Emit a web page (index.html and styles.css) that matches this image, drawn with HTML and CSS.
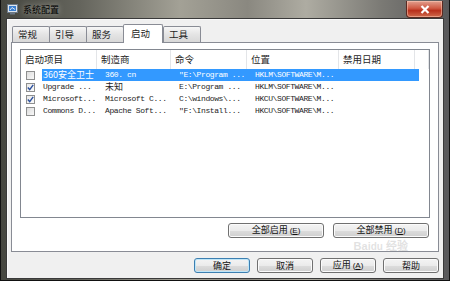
FILE: index.html
```html
<!DOCTYPE html>
<html lang="zh-CN">
  <head>
    <meta charset="UTF-8" />
    <title>系统配置</title>
    <link rel="stylesheet" href="styles.css">
  </head>
  <body>
    <div class="window">
      <div class="titlebar">
        <svg class="app-icon" width="11" height="11" viewBox="0 0 11 11">
          <rect x="0.5" y="0.5" width="10" height="8" fill="#dfe6ee" stroke="#6d7a88"/>
          <rect x="2" y="2" width="7" height="5" fill="#3a7fd0"/>
          <path d="M3 6 L5 3.5 L8 5.5" stroke="#fff" stroke-width="0.8" fill="none"/>
          <rect x="3" y="9" width="5" height="1.5" fill="#6d7a88"/>
        </svg>
        <span class="title">系统配置</span>
        <div class="close">
          <svg width="10" height="9" viewBox="0 0 10 9">
            <path d="M1.5 1 L8.5 8 M8.5 1 L1.5 8" stroke="#fff" stroke-width="2.2"/>
          </svg>
        </div>
      </div>
      <div class="client">
        <div class="tabs">
          <span class="tab">常规</span>
          <span class="tab">引导</span>
          <span class="tab">服务</span>
          <span class="tab active">启动</span>
          <span class="tab">工具</span>
        </div>
        <div class="panel">
          <div class="list">
            <div class="head">
              <span>启动项目</span>
              <span>制造商</span>
              <span>命令</span>
              <span>位置</span>
              <span>禁用日期</span>
              <span></span>
            </div>
            <div class="row">
              <span class="check"></span>
              <div class="cells selected">
                <span><b class="cn">360安全卫士</b></span>
                <span>360. cn</span>
                <span>"E:\Program ...</span>
                <span>HKLM\SOFTWARE\M...</span>
                <span></span>
              </div>
            </div>
            <div class="row">
              <span class="check on">
                <svg width="7" height="7" viewBox="0 0 7 7"><path d="M0.8 3.6 L2.7 5.6 L6.2 0.9" stroke="#2a4f9e" stroke-width="1.4" fill="none"/></svg>
              </span>
              <div class="cells">
                <span>Upgrade ...</span>
                <span><b class="cn">未知</b></span>
                <span>E:\Program ...</span>
                <span>HKLM\SOFTWARE\M...</span>
                <span></span>
              </div>
            </div>
            <div class="row">
              <span class="check on">
                <svg width="7" height="7" viewBox="0 0 7 7"><path d="M0.8 3.6 L2.7 5.6 L6.2 0.9" stroke="#2a4f9e" stroke-width="1.4" fill="none"/></svg>
              </span>
              <div class="cells">
                <span>Microsoft...</span>
                <span>Microsoft C...</span>
                <span>C:\windows\...</span>
                <span>HKCU\SOFTWARE\M...</span>
                <span></span>
              </div>
            </div>
            <div class="row">
              <span class="check"></span>
              <div class="cells">
                <span>Commons D...</span>
                <span>Apache Soft...</span>
                <span>"F:\Install...</span>
                <span>HKCU\SOFTWARE\M...</span>
                <span></span>
              </div>
            </div>
          </div>
          <div class="panel-buttons">
            <button class="btn wide">全部启用 <span class="key">(<u>E</u>)</span></button>
            <button class="btn wide">全部禁用 <span class="key">(<u>D</u>)</span></button>
          </div>
          <div class="watermark">Bai<span>du</span> 经验</div>
        </div>
        <div class="actions">
          <button class="btn default">确定</button>
          <button class="btn">取消</button>
          <button class="btn">应用 <span class="key">(<u>A</u>)</span></button>
          <button class="btn">帮助</button>
        </div>
      </div>
    </div>
  </body>
</html>
```

FILE: styles.css
```css
body,
html {
  margin: 0;
  padding: 0;
  width: 450px;
  height: 281px;
  overflow: hidden;
  font-family: 'Noto Sans CJK SC', 'Liberation Sans', sans-serif;
  color: #1e1e1e;
}
body {
  background: linear-gradient(90deg, #45463f 0%, #65655d 18%, #a3a196 40%, #8a8880 55%, #aeaca2 68%, #7a7974 85%, #58585a 100%);
}
.window {
  display: flex;
  flex-direction: column;
  height: 281px;
  box-shadow: inset 1px 0 0 #111, inset -1px 0 0 #111, inset 0 -1px 0 #111;
}
.titlebar {
  display: flex;
  align-items: flex-start;
  height: 22px;
  padding-left: 7px;
  padding-right: 7px;
}
.app-icon {
  margin-top: 4px;
}
.title {
  margin-left: 5px;
  margin-top: 3px;
  font-size: 9px;
  line-height: 14px;
  color: #000;
  text-shadow: 0 0 6px rgba(240, 238, 230, 0.7);
}
.close {
  margin-left: auto;
  margin-top: 1px;
  width: 35px;
  height: 16px;
  display: flex;
  align-items: center;
  justify-content: center;
  border: 1px solid #5a2a22;
  border-top: none;
  border-radius: 0 0 4px 4px;
  background: linear-gradient(#e2a08f, #cf5a44 45%, #b8301c 60%, #cf6a4c);
  box-shadow: inset 0 0 0 1px rgba(255, 210, 190, 0.5);
}
.client {
  flex: 1;
  margin: 0 6px 7px 6px;
  background: #f0f0f0;
  border: 1px solid #3a3a3a;
  box-shadow: inset 1px 1px 0 #fafafa;
  display: flex;
  flex-direction: column;
  padding: 5px 4px 5px 4px;
}
.tabs {
  display: flex;
  align-items: flex-end;
  height: 18px;
  padding-left: 1px;
  position: relative;
  z-index: 1;
}
.tab {
  height: 15px;
  width: 36px;
  margin-right: -1px;
  font-size: 9.5px;
  line-height: 15px;
  text-indent: 5px;
  background: linear-gradient(#f6f6f6, #e4e4e4 50%, #d8d8d8);
  border: 1px solid #898c95;
  border-bottom: none;
  border-radius: 2px 2px 0 0;
}
.tab.active {
  height: 18px;
  width: 38px;
  margin: 0 0 -1px 0;
  background: #fff;
  line-height: 17px;
  text-indent: 7px;
}
.panel {
  position: relative;
  height: 202px;
  background: #fff;
  border: 1px solid #898c95;
  padding: 6px 8px 0 8px;
}
.list {
  height: 167px;
  border: 1px solid #828790;
  font-family: 'Liberation Mono', 'Noto Sans CJK SC', monospace;
  font-size: 8px;
  letter-spacing: -0.4px;
}
.head {
  display: grid;
  grid-template-columns: 76px 74px 76px 92px 76px 1fr;
  height: 18px;
  margin-bottom: 1px;
  font-family: 'Noto Sans CJK SC', sans-serif;
  font-size: 9.5px;
  letter-spacing: 0;
  line-height: 19px;
  color: #1e1e1e;
}
.head span {
  padding-left: 4px;
  border-right: 1px solid #e3e5e8;
}
.row {
  display: flex;
  height: 12px;
  line-height: 12px;
}
.check {
  width: 7px;
  height: 7px;
  margin: 2px 7px 0 5px;
  border: 1px solid #8e8f8f;
  background: linear-gradient(135deg, #dcdcdc, #f8f8f8);
  display: flex;
  align-items: center;
  justify-content: center;
}
.check.on {
  background: linear-gradient(135deg, #e8e8e8, #fafafa);
}
.cells {
  display: grid;
  grid-template-columns: 59px 74px 76px 92px 76px;
  width: 377px;
  white-space: nowrap;
}
.cells span {
  padding-left: 4px;
  overflow: hidden;
}
.cells span:first-child {
  padding-left: 1px;
}
.cells.selected {
  background: #3399ff;
  color: #fff;
}
.cn {
  font-family: 'Noto Sans CJK SC', sans-serif;
  font-weight: normal;
  font-size: 9px;
  letter-spacing: 0;
}
.panel-buttons {
  display: flex;
  justify-content: flex-end;
  gap: 9px;
  margin-top: 5px;
  padding-right: 1px;
}
.btn {
  height: 15px;
  padding: 0;
  font-family: 'Noto Sans CJK SC', sans-serif;
  font-size: 9px;
  line-height: 12px;
  color: #111;
  background: linear-gradient(#f4f4f4, #ebebeb 50%, #dddddd 51%, #cfcfcf);
  border: 1px solid #707070;
  border-radius: 3px;
  box-shadow: inset 0 0 0 1px #fbfbfb;
}
.btn.wide {
  width: 96px;
}
.key {
  font-family: 'Liberation Sans', sans-serif;
  font-size: 8px;
}
.watermark {
  position: absolute;
  right: 30px;
  bottom: -1px;
  font-family: 'Liberation Sans', sans-serif;
  font-weight: bold;
  font-size: 11px;
  line-height: 11px;
  color: rgba(170, 170, 170, 0.35);
}
.watermark span {
  font-size: 10px;
}
.actions {
  display: flex;
  justify-content: flex-end;
  gap: 7px;
  margin-top: 6px;
}
.actions .btn {
  width: 56px;
}
.actions .btn.default {
  border-color: #3c7fb1;
  box-shadow: inset 0 0 0 1px #bfe6f8;
}
```
